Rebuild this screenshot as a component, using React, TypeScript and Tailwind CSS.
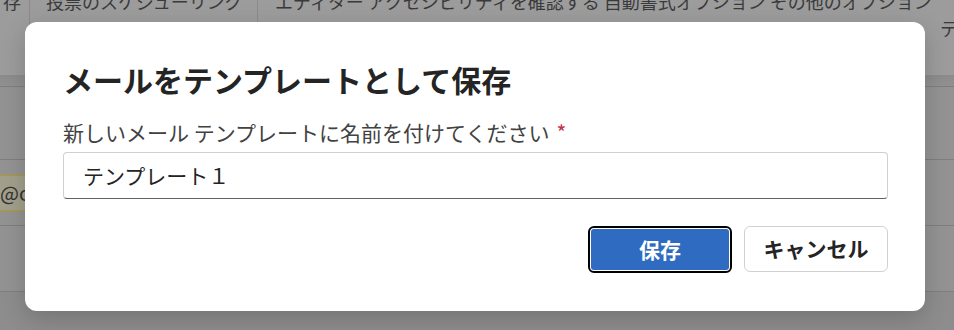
const jp = "font-['Noto_Sans_CJK_JP','Noto_Sans',sans-serif]";

function Backdrop() {
  return (
    <div className="flex h-full flex-col bg-[#939393]">
      {/* ribbon, dimmed by the modal backdrop */}
      <div className="relative flex h-[75px] flex-col bg-[#9c9c9c] text-[18px] leading-none text-[#3a3a3a]">
        <div className="flex h-[75px] items-start overflow-hidden">
          <span className="h-full w-[30px] shrink-0 overflow-hidden border-r border-[#8a8a8a] pl-[3px] whitespace-nowrap">
            <span className="-mt-[8px] block">存</span>
          </span>
          <span className="h-full w-[228px] shrink-0 border-r border-[#8a8a8a] pl-[16px] whitespace-nowrap">
            <span className="-mt-[8px] block">投票のスケジューリング</span>
          </span>
          <div className="flex flex-1 flex-col overflow-hidden pl-[17px] whitespace-nowrap">
            <span className="-mt-[8px] block">
              エディター アクセシビリティを確認する 自動書式オプション その他のオプション
            </span>
            <span className="mt-[9px] block pl-[665px]">テン</span>
          </div>
        </div>
      </div>
      <div className="h-[11px] bg-gradient-to-b from-[#8c8c8c] to-[#919191]" />
      <div className="h-[73px] border-t border-[#7e7e7e]" />
      <div className="flex h-[66px] items-center border-t border-[#7e7e7e]">
        <span className="flex h-[36px] items-center border-y border-[#b39a2a] bg-[#a29f8c] pr-3 text-[20px] text-[#333]">
          @o
        </span>
      </div>
      <div className="h-[66px] border-t border-[#7e7e7e]" />
      <div className="flex-1 border-t border-[#7e7e7e] bg-[#8d8d8d]" />
    </div>
  );
}

export default function App() {
  return (
    <div className={`relative h-[330px] w-[954px] overflow-hidden ${jp}`}>
      <Backdrop />

      <div
        role="dialog"
        aria-modal="true"
        className="absolute top-[22px] left-[25px] flex w-[900px] flex-col rounded-[12px] bg-white pt-[36px] pr-[37px] pb-[38px] pl-[38px] shadow-[0_8px_24px_rgba(0,0,0,0.18)]"
      >
        <h2 className="text-[30px] leading-[42px] font-bold text-[#242424]">
          メールをテンプレートとして保存
        </h2>

        <label className="mt-[17px] text-[21px] leading-[30px] text-[#424242]">
          新しいメール テンプレートに名前を付けてください
          <span className="ml-[7px] text-[#c4314b]">*</span>
        </label>

        <div className="mt-[5px] flex h-[47px] items-center rounded-[4px] border border-[#d1d1d1] border-b-[#616161] bg-white px-[19px]">
          <input
            defaultValue="テンプレート１"
            className="w-full bg-transparent text-[21px] text-[#242424] outline-none"
          />
        </div>

        <div className="mt-[27px] flex justify-end gap-[12px]">
          <button
            type="button"
            className="flex h-[47px] w-[144px] items-center justify-center rounded-[6px] border-2 border-black bg-white p-px"
          >
            <span className="flex h-full w-full items-center justify-center rounded-[3px] bg-[#2f6bc1] text-[21px] font-bold text-white">
              保存
            </span>
          </button>
          <button
            type="button"
            className="flex h-[46px] w-[144px] items-center justify-center rounded-[6px] border border-[#d1d1d1] bg-white text-[21px] font-bold text-[#242424]"
          >
            キャンセル
          </button>
        </div>
      </div>
    </div>
  );
}
